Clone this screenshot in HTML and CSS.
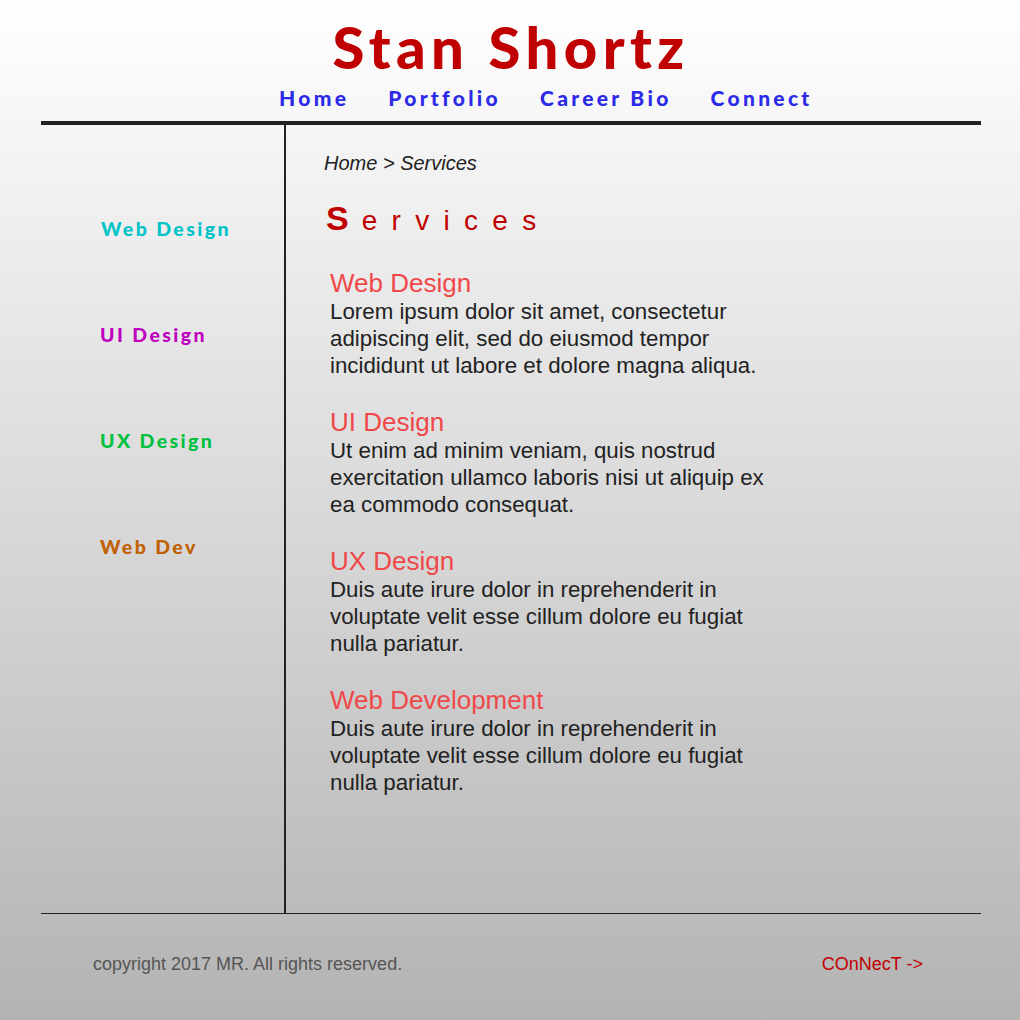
FILE: index.html
```html
<!DOCTYPE html>
<html lang="en">
    <head>
        <meta charset="UTF-8">
        <title>Stan Shortz - Services</title>
        <link rel="stylesheet" href="styles.css">
    </head>
    <body>
        <div class="page">
            <header class="top">
                <h1 class="brand">Stan Shortz</h1>
                <nav class="nav">
                    <a href="#">Home</a>
                    <a href="#">Portfolio</a>
                    <a href="#">Career Bio</a>
                    <a href="#">Connect</a>
                </nav>
            </header>
            <div class="main">
                <aside class="side">
                    <a class="web" href="#">Web Design</a>
                    <a class="ui" href="#">UI Design</a>
                    <a class="ux" href="#">UX Design</a>
                    <a class="dev" href="#">Web Dev</a>
                </aside>
                <section class="content">
                    <p class="crumb">Home &gt; Services</p>
                    <h2 class="title"><span class="cap">S</span>ervices</h2>
                    <div class="service">
                        <h3>Web Design</h3>
                        <p>Lorem ipsum dolor sit amet, consectetur adipiscing elit, sed do eiusmod tempor incididunt ut labore et dolore magna aliqua.</p>
                    </div>
                    <div class="service">
                        <h3>UI Design</h3>
                        <p>Ut enim ad minim veniam, quis nostrud exercitation ullamco laboris nisi ut aliquip ex ea commodo consequat.</p>
                    </div>
                    <div class="service">
                        <h3>UX Design</h3>
                        <p>Duis aute irure dolor in reprehenderit in voluptate velit esse cillum dolore eu fugiat nulla pariatur.</p>
                    </div>
                    <div class="service">
                        <h3>Web Development</h3>
                        <p>Duis aute irure dolor in reprehenderit in voluptate velit esse cillum dolore eu fugiat nulla pariatur.</p>
                    </div>
                </section>
            </div>
            <footer class="foot">
                <span class="copy">copyright 2017 MR. All rights reserved.</span>
                <a class="connect" href="#">COnNecT -&gt;</a>
            </footer>
        </div>
    </body>
</html>
```

FILE: styles.css
```css
html { background: #b3b3b3; }
body { margin: 0; min-height: 1020px; background: linear-gradient(#ffffff, #b3b3b3); font-family: "Liberation Sans", Arial, sans-serif; }
a { text-decoration: none; }

.page { width: 940px; margin-left: 41px; }

.top { height: 121px; border-bottom: 4px solid #222; }
.brand { margin: 0; padding-top: 17px; font-family: Lato, sans-serif; font-weight: 900; font-size: 58px; line-height: 60px; letter-spacing: 5.4px; color: #c00000; text-align: center; }
.nav { display: flex; gap: 39px; padding-left: 238px; margin-top: 8px; }
.nav a { font-family: Lato, sans-serif; font-weight: 900; font-size: 21px; letter-spacing: 3.3px; color: #2a2ae8; }

.main { display: grid; grid-template-columns: 243px 1fr; height: 788px; border-bottom: 1px solid #222; }
.side { display: flex; flex-direction: column; padding: 92px 0 0 59px; }
.side a { height: 106px; font-family: Lato, sans-serif; font-weight: 900; font-size: 19.5px; letter-spacing: 2.4px; }
.side .web { color: #00c4c8; padding-left: 1px; }
.side .ui { color: #c000c0; }
.side .ux { color: #00c040; }
.side .dev { color: #c06000; }

.content { border-left: 2px solid #222; padding: 26px 0 0 38px; }
.crumb { margin: 0; font-style: italic; font-size: 20px; line-height: 24px; color: #222; }
.title { margin: 25px 0 30px 2px; font-weight: normal; font-size: 28px; line-height: 36px; letter-spacing: 14.3px; color: #c00000; }
.title .cap { font-weight: bold; font-size: 34px; letter-spacing: 13px; }
.service { margin: 0 0 29px 6px; width: 450px; }
.service h3 { margin: 0; font-weight: normal; font-size: 26px; line-height: 29px; color: #f04848; }
.service p { margin: 0; font-size: 22.3px; line-height: 27px; color: #222; }

.foot { display: flex; justify-content: space-between; padding: 40px 58px 0 52px; font-size: 18px; line-height: 20px; }
.copy { color: #555; }
.connect { color: #c00000; }
```
